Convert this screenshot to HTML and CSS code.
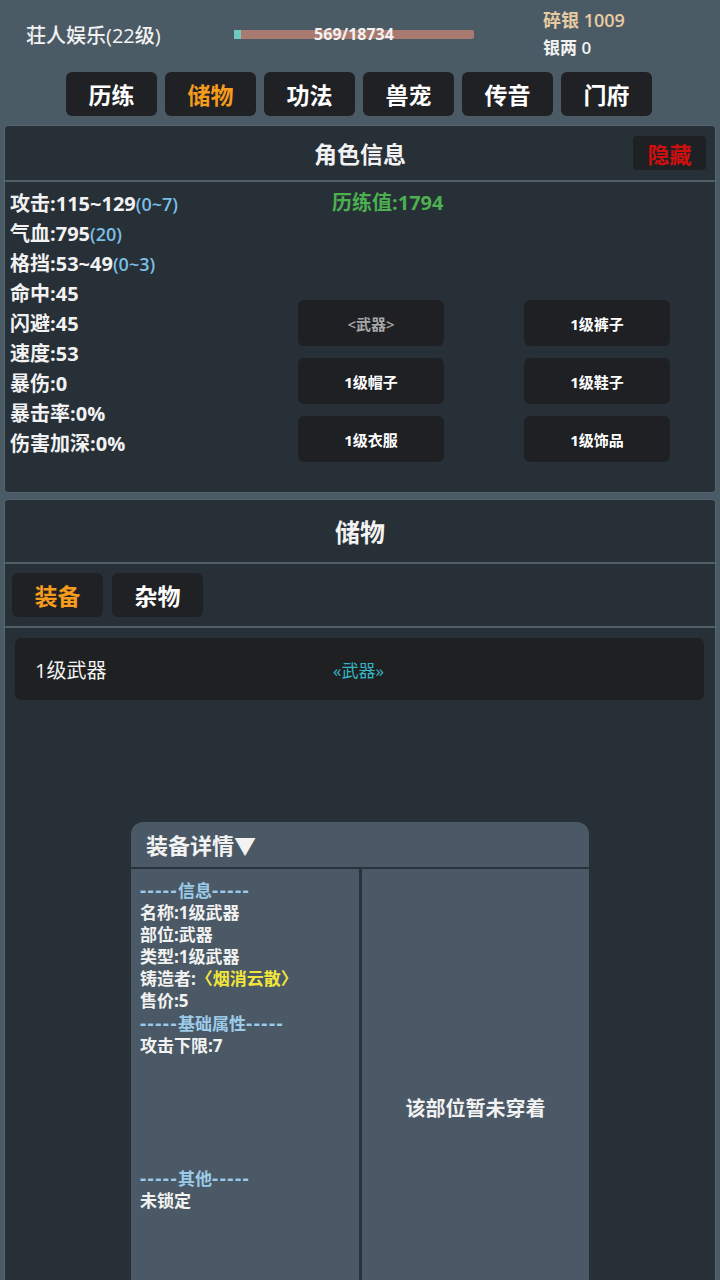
FILE: index.html
```html
<!DOCTYPE html>
<html lang="zh-CN">
<head>
    <meta charset="UTF-8">
    <meta name="viewport" content="width=720, initial-scale=1.0">
    <title>储物</title>
    <link rel="stylesheet" href="styles.css">
</head>
<body>
    <div class="topbar">
        <div class="nome">荘人娱乐(22级)</div>
        <div class="exp">
            <div class="expFill"></div>
            <span class="expTxt">569/18734</span>
        </div>
        <div class="moedas">
            <div class="prata">碎银 1009</div>
            <div class="liang">银两 0</div>
        </div>
    </div>
    <div class="menu">
        <button class="tab">历练</button>
        <button class="tab ativo">储物</button>
        <button class="tab">功法</button>
        <button class="tab">兽宠</button>
        <button class="tab">传音</button>
        <button class="tab">门府</button>
    </div>

    <div class="painel">
        <div class="cabec">
            <span class="titulo">角色信息</span>
            <button class="btnOcultar">隐藏</button>
        </div>
        <div class="infoCorpo">
            <div class="stats">
                <div>攻击:115~129<span class="extra">(0~7)</span></div>
                <div>气血:795<span class="extra">(20)</span></div>
                <div>格挡:53~49<span class="extra">(0~3)</span></div>
                <div>命中:45</div>
                <div>闪避:45</div>
                <div>速度:53</div>
                <div>暴伤:0</div>
                <div>暴击率:0%</div>
                <div>伤害加深:0%</div>
            </div>
            <div class="lado">
                <div class="xp">历练值:1794</div>
                <div class="slots">
                    <button class="slot vazio">&lt;武器&gt;</button>
                    <button class="slot">1级裤子</button>
                    <button class="slot">1级帽子</button>
                    <button class="slot">1级鞋子</button>
                    <button class="slot">1级衣服</button>
                    <button class="slot">1级饰品</button>
                </div>
            </div>
        </div>
    </div>

    <div class="painel painelInv">
        <div class="cabec cabecInv">
            <span class="titulo tituloInv">储物</span>
        </div>
        <div class="subMenu">
            <button class="subTab ativo">装备</button>
            <button class="subTab">杂物</button>
        </div>
        <div class="lista">
            <div class="item">
                <span class="itemNome">1级武器</span>
                <span class="itemTipo">«武器»</span>
            </div>
        </div>

        <div class="detalhe">
            <div class="detCabec">装备详情▼</div>
            <div class="detCorpo">
                <div class="detEsq">
                    <div class="secao"><span class="traco">-----</span>信息<span class="traco">-----</span></div>
                    <div>名称:1级武器</div>
                    <div>部位:武器</div>
                    <div>类型:1级武器</div>
                    <div>铸造者:<span class="autor">〈烟消云散〉</span></div>
                    <div>售价:5</div>
                    <div class="secao"><span class="traco">-----</span>基础属性<span class="traco">-----</span></div>
                    <div>攻击下限:7</div>
                    <div class="espaco"></div>
                    <div class="secao"><span class="traco">-----</span>其他<span class="traco">-----</span></div>
                    <div>未锁定</div>
                </div>
                <div class="detDir">
                    <div class="naoUsado">该部位暂未穿着</div>
                </div>
            </div>
        </div>
    </div>
</body>
</html>
```

FILE: styles.css
```css
body{
    margin: 0;
    width: 720px;
    height: 1280px;
    overflow: hidden;
    background: #4b5b66;
    color: #f2f2f2;
    font-family: "Open Sans", "Noto Sans CJK SC", sans-serif;
}
button{
    font-family: inherit;
    border: none;
    cursor: pointer;
    padding: 0;
}
.topbar{
    display: flex;
    align-items: center;
    padding: 6px 0 0 26px;
    height: 56px;
}
.nome{
    width: 208px;
    font-size: 20px;
    font-weight: 500;
}
.exp{
    position: relative;
    width: 240px;
    height: 9px;
    background: #a97b70;
    border-radius: 2px;
}
.expFill{
    width: 7px;
    height: 100%;
    background: #6fc9c0;
}
.expTxt{
    position: absolute;
    left: 0;
    right: 0;
    top: -7px;
    text-align: center;
    font-size: 16px;
    line-height: 22px;
    font-weight: 700;
}
.moedas{
    margin-left: 69px;
    font-size: 18px;
    line-height: 28px;
    font-weight: 600;
}
.prata{
    color: #e9cba2;
}
.liang{
    font-size: 17px;
}
.menu{
    display: flex;
    gap: 8px;
    padding: 10px 0 0 66px;
}
.tab{
    width: 91px;
    height: 44px;
    background: #1f2124;
    color: #fff;
    font-size: 23px;
    font-weight: 700;
    border-radius: 6px;
}
.ativo{
    color: #f59b1d;
}
.painel{
    margin: 9px 4px 0 4px;
    background: #272f37;
    border: 1px solid #56666f;
    border-radius: 4px;
}
.cabec{
    position: relative;
    height: 54px;
    display: flex;
    align-items: center;
    justify-content: center;
    border-bottom: 2px solid #4f5f69;
}
.titulo{
    font-size: 23px;
    font-weight: 700;
}
.btnOcultar{
    position: absolute;
    right: 9px;
    top: 10px;
    width: 73px;
    height: 34px;
    background: #1e2124;
    color: #d00f0f;
    font-size: 22px;
    font-weight: 700;
    border-radius: 4px;
}
.infoCorpo{
    display: flex;
    padding: 4px 0 30px 0;
}
.stats{
    width: 288px;
    padding: 3px 0 0 5px;
    font-size: 20px;
    font-weight: 700;
    line-height: 30px;
}
.extra{
    color: #79bfe6;
    font-size: 18px;
    font-weight: 600;
}
.lado{
    flex: 1;
}
.xp{
    padding: 2px 0 0 34px;
    color: #4caf50;
    font-size: 20px;
    font-weight: 700;
    line-height: 30px;
}
.slots{
    display: grid;
    grid-template-columns: 146px 146px;
    column-gap: 80px;
    row-gap: 12px;
    margin-top: 82px;
}
.slot{
    height: 46px;
    background: #1e2023;
    color: #fff;
    font-size: 15px;
    font-weight: 700;
    border-radius: 6px;
}
.vazio{
    color: #a8a8a8;
    font-weight: 600;
}
.painelInv{
    position: relative;
    margin-top: 6px;
    height: 800px;
}
.cabecInv{
    height: 62px;
}
.tituloInv{
    font-size: 25px;
}
.subMenu{
    display: flex;
    gap: 9px;
    padding: 9px 7px;
    border-bottom: 2px solid #4f5f69;
}
.subTab{
    width: 91px;
    height: 44px;
    background: #1f2124;
    color: #fff;
    font-size: 23px;
    font-weight: 700;
    border-radius: 6px;
}
.subTab.ativo{
    color: #f59b1d;
}
.lista{
    padding: 10px 11px 0 10px;
}
.item{
    display: flex;
    align-items: center;
    height: 62px;
    background: #1e2022;
    border-radius: 6px;
}
.itemNome{
    width: 298px;
    padding-left: 20px;
    font-size: 20px;
}
.itemTipo{
    color: #36b6c6;
    font-size: 17px;
}
.detalhe{
    position: absolute;
    top: 322px;
    left: 126px;
    width: 458px;
    height: 480px;
    background: #4a5965;
    border-radius: 12px 12px 0 0;
}
.detCabec{
    height: 45px;
    padding-left: 15px;
    font-size: 22px;
    font-weight: 700;
    line-height: 46px;
    border-bottom: 2px solid #28333b;
}
.detCorpo{
    display: flex;
    height: 433px;
}
.detEsq{
    width: 219px;
    padding: 10px 0 0 9px;
    font-size: 17px;
    font-weight: 700;
    line-height: 22px;
    border-right: 3px solid #28333b;
}
.secao{
    color: #9ccbea;
}
.traco{
    letter-spacing: 1.5px;
    font-size: 19px;
}
.autor{
    color: #f3e63c;
}
.espaco{
    height: 110px;
}
.detDir{
    flex: 1;
    text-align: center;
    padding-top: 224px;
}
.naoUsado{
    font-size: 20px;
    font-weight: 700;
}
```
